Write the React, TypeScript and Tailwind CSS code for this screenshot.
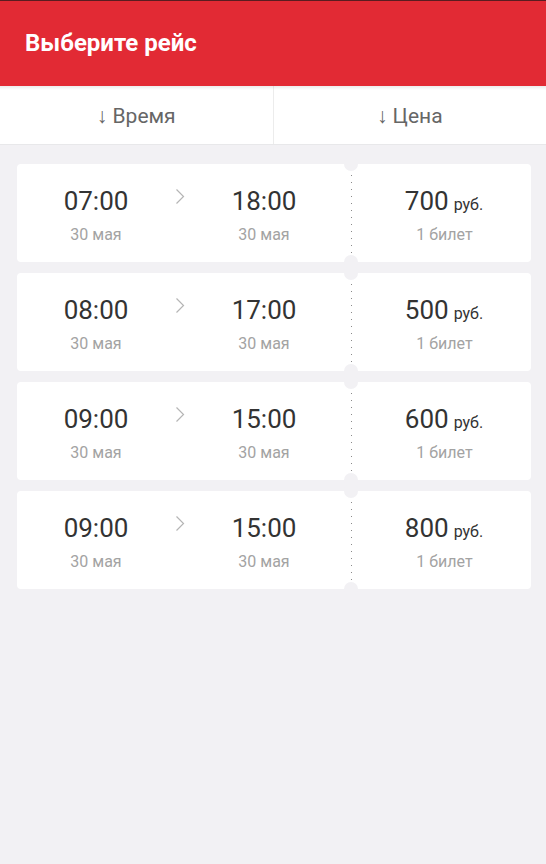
import React from "react";

const trips = [
  { from: "07:00", to: "18:00", price: "700" },
  { from: "08:00", to: "17:00", price: "500" },
  { from: "09:00", to: "15:00", price: "600" },
  { from: "09:00", to: "15:00", price: "800" },
];

function Chevron() {
  return (
    <svg width="10" height="17" viewBox="0 0 10 17" fill="none">
      <path d="M1.5 1.5 L8.5 8.5 L1.5 15.5" stroke="#b5b5b5" strokeWidth="1.2" />
    </svg>
  );
}

function Card({ from, to, price }: { from: string; to: string; price: string }) {
  return (
    <div className="relative flex h-[98px] rounded-[4px] bg-white">
      <div className="flex w-[334px] items-start pl-[19px] pt-[22px]">
        <div className="flex w-[120px] flex-col items-center">
          <div className="text-[26px] leading-[30px] text-[#333]">{from}</div>
          <div className="mt-[9px] text-[16px] leading-[20px] text-[#a3a3a3]">30 мая</div>
        </div>
        <div className="flex w-[48px] justify-center pt-[2px]">
          <Chevron />
        </div>
        <div className="flex w-[120px] flex-col items-center">
          <div className="text-[26px] leading-[30px] text-[#333]">{to}</div>
          <div className="mt-[9px] text-[16px] leading-[20px] text-[#a3a3a3]">30 мая</div>
        </div>
      </div>
      <div className="flex flex-col items-center gap-[6px] pt-[11px]">
        {Array.from({ length: 12 }).map((_, i) => (
          <div key={i} className="h-px w-px bg-[#8a8a8a]" />
        ))}
      </div>
      <div className="flex flex-1 flex-col items-center pt-[22px]">
        <div className="flex h-[30px] items-baseline pl-[5px] leading-[30px] text-[#333]">
          <span className="text-[26px]">{price}</span>
          <span className="ml-[5px] text-[16px]">руб.</span>
        </div>
        <div className="mt-[9px] pl-[6px] text-[16px] leading-[20px] text-[#a3a3a3]">1 билет</div>
      </div>
      <div className="absolute left-[327px] top-[-7px] h-[14px] w-[14px] rounded-full bg-[#f2f1f4]" />
      <div className="absolute bottom-[-7px] left-[327px] h-[14px] w-[14px] rounded-full bg-[#f2f1f4]" />
    </div>
  );
}

export default function App() {
  return (
    <div
      className="flex min-h-[864px] w-[546px] flex-col bg-[#f2f1f4]"
      style={{ fontFamily: "Roboto, 'Noto Sans', sans-serif" }}
    >
      <div className="h-px bg-[#5a1c20]" />
      <div className="flex h-[85px] items-center bg-[#e22a34] pl-[25px] pb-[1px]">
        <span className="text-[24px] font-bold text-white">Выберите рейс</span>
      </div>
      <div className="relative flex h-[59px] border-b border-[#e8e8ea] bg-white">
        <div className="pointer-events-none absolute left-0 right-0 top-0 h-[4px] bg-gradient-to-b from-[#00000014] to-transparent" />
        <div className="flex flex-1 items-center justify-center border-r border-[#ececec] pt-[3px] text-[21px] text-[#666]">
          ↓ Время
        </div>
        <div className="flex flex-1 items-center justify-center pt-[3px] text-[21px] text-[#666]">↓ Цена</div>
      </div>
      <div className="flex flex-col gap-[11px] pl-[17px] pr-[15px] pt-[19px]">
        {trips.map((t, i) => (
          <Card key={i} {...t} />
        ))}
      </div>
    </div>
  );
}
